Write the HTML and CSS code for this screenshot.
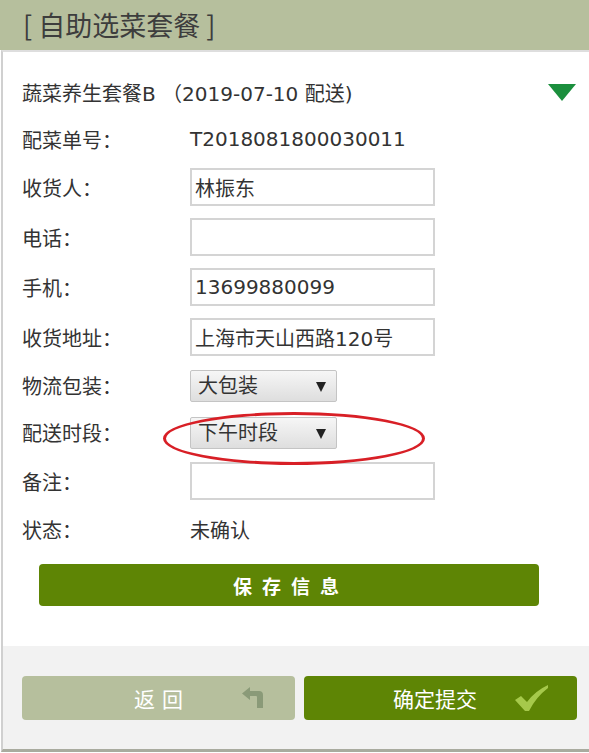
FILE: index.html
```html
<!DOCTYPE html>
<html lang="zh-CN">

<head>
    <meta charset="UTF-8">
    <meta name="viewport" content="width=device-width, initial-scale=1.0">
    <title>自助选菜套餐</title>
    <link rel="stylesheet" href="styles.css">
</head>

<body>
    <div class="topbar">[ 自助选菜套餐 ]</div>

    <div class="panel">
        <div class="title-row">
            <span>蔬菜养生套餐B （2019-07-10 配送)</span>
            <span class="toggle"></span>
        </div>

        <div class="form">
            <div class="row text-row">
                <label>配菜单号：</label>
                <span class="value">T2018081800030011</span>
            </div>
            <div class="row">
                <label for="shr">收货人：</label>
                <input type="text" id="shr" value="林振东">
            </div>
            <div class="row">
                <label for="tel">电话：</label>
                <input type="text" id="tel">
            </div>
            <div class="row">
                <label for="mob">手机：</label>
                <input type="text" id="mob" value="13699880099">
            </div>
            <div class="row">
                <label for="addr">收货地址：</label>
                <input type="text" id="addr" value="上海市天山西路120号">
            </div>
            <div class="row select-row">
                <label for="bz">物流包装：</label>
                <span class="select-wrap">
                    <select id="bz">
                        <option>大包装</option>
                        <option>小包装</option>
                    </select>
                </span>
            </div>
            <div class="row select-row">
                <label for="sd">配送时段：</label>
                <span class="select-wrap marked">
                    <select id="sd">
                        <option>下午时段</option>
                        <option>上午时段</option>
                    </select>
                </span>
            </div>
            <div class="row">
                <label for="memo">备注：</label>
                <input type="text" id="memo">
            </div>
            <div class="row text-row">
                <label>状态：</label>
                <span class="value">未确认</span>
            </div>
        </div>

        <button class="save">保存信息</button>
    </div>

    <div class="footer">
        <button class="btn back">
            <span class="btn-text">返回</span>
            <svg class="btn-icon back-icon" viewBox="0 0 24 21" width="24" height="21">
                <path d="M0 6.5 L8 0 L8 4 L17 4 Q21 4 21 8 L21 21 L15 21 L15 10 Q15 9 14 9 L8 9 L8 13 Z" fill="#8a9a78"/>
            </svg>
        </button>
        <button class="btn submit">
            <span class="btn-text">确定提交</span>
            <svg class="btn-icon check-icon" viewBox="0 0 33 26" width="33" height="26">
                <path d="M0 15 L6 11 L12 17 Q20 6 33 0 L33 3 Q21 12 14 26 L10 26 Z" fill="#a6c94b"/>
            </svg>
        </button>
    </div>
</body>

</html>
```

FILE: styles.css
```css
* {
    box-sizing: border-box;
    padding: 0;
    margin: 0;
}

body {
    width: 589px;
    font-family: "DejaVu Sans", "Noto Sans CJK SC", sans-serif;
    color: #333;
    background-color: white;
}

.topbar {
    height: 50px;
    background-color: #b6bf9d;
    color: #3d3d3d;
    font-family: "Noto Sans CJK SC", sans-serif;
    font-size: 27px;
    line-height: 50px;
    padding-left: 23px;
}

.panel {
    margin-left: 1px;
    border-left: 2px solid #d0d0d0;
    border-top: 2px solid #dedede;
    padding: 23px 13px 40px 19px;
}

.title-row {
    height: 34px;
    margin-bottom: 13px;
    display: flex;
    align-items: center;
    justify-content: space-between;
    font-size: 20px;
}

.toggle {
    width: 0;
    height: 0;
    border-left: 14px solid transparent;
    border-right: 14px solid transparent;
    border-top: 17px solid #1b8f3d;
}

.form {
    display: flex;
    flex-direction: column;
    gap: 12px;
}

.row {
    display: flex;
    align-items: center;
    font-size: 20px;
}

.row label {
    width: 168px;
    flex-shrink: 0;
}

.text-row {
    height: 34px;
}

.select-row {
    height: 35px;
}

input {
    width: 245px;
    height: 38px;
    border: 2px solid #d4d4d4;
    padding: 0 3px;
    font-family: inherit;
    font-size: 20px;
    color: #333;
    outline: none;
}

.select-wrap {
    position: relative;
    display: inline-block;
}

.select-wrap::after {
    content: "";
    position: absolute;
    right: 11px;
    top: 12px;
    border-left: 5px solid transparent;
    border-right: 5px solid transparent;
    border-top: 10px solid #222;
    pointer-events: none;
}

select {
    appearance: none;
    -webkit-appearance: none;
    width: 147px;
    height: 32px;
    border: 1px solid #c4c4c4;
    border-radius: 2px;
    background: linear-gradient(#f6f6f6, #dedede);
    font-family: inherit;
    font-size: 20px;
    color: #333;
    padding: 0 0 0 7px;
    display: block;
}

.marked::before {
    content: "";
    position: absolute;
    left: -27px;
    top: -5px;
    width: 256px;
    height: 47px;
    border: 3px solid #d81f26;
    border-radius: 50%;
    pointer-events: none;
}

.save {
    display: block;
    width: 500px;
    height: 42px;
    margin: 18px 0 0 17px;
    border: none;
    border-radius: 4px;
    background-color: #5e8505;
    color: white;
    font-family: "Noto Sans CJK SC", sans-serif;
    font-size: 19px;
    font-weight: bold;
    letter-spacing: 10px;
    padding-left: 4px;
    cursor: pointer;
}

.footer {
    margin-left: 1px;
    border-left: 2px solid #d0d0d0;
    border-bottom: 3px solid #a9ab9f;
    background-color: #f2f2f2;
    padding: 30px 12px 29px 19px;
    display: flex;
    gap: 9px;
}

.btn {
    position: relative;
    width: 273px;
    height: 44px;
    border: none;
    border-radius: 4px;
    color: white;
    font-family: "Noto Sans CJK SC", sans-serif;
    font-size: 21px;
    cursor: pointer;
    display: flex;
    align-items: center;
    justify-content: center;
}

.back {
    background-color: #b6bf9d;
    letter-spacing: 7px;
    padding-left: 7px;
}

.submit {
    background-color: #5e8505;
    padding-right: 11px;
}

.btn-icon {
    position: absolute;
}

.back-icon {
    right: 29px;
    top: 11px;
}

.check-icon {
    right: 29px;
    top: 9px;
}
```
